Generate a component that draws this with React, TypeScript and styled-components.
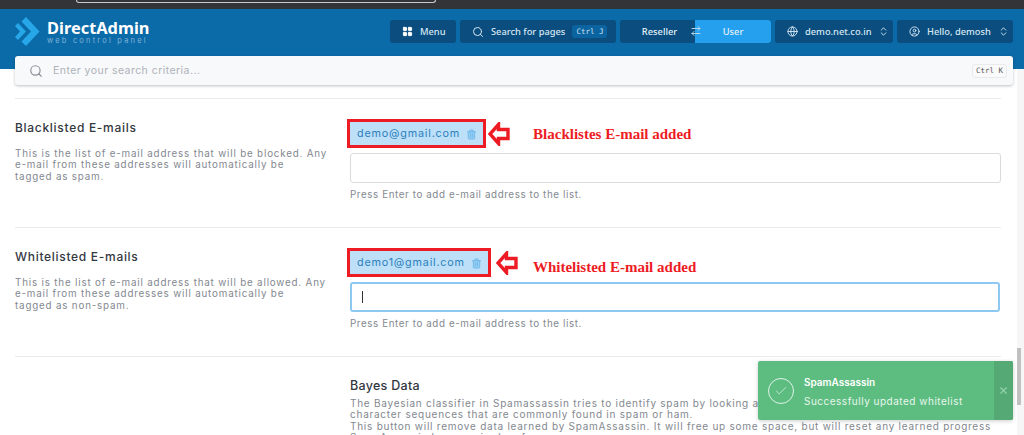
import React from "react";
import styled, { createGlobalStyle } from "styled-components";
import { LayoutGrid, Search, ArrowRightLeft, Globe, CircleUser, ChevronsUpDown, Trash2, Check, X } from "lucide-react";

const Global = createGlobalStyle`
  html, body { margin: 0; padding: 0; background: #fff; }
  body { font-family: "Inter", "Liberation Sans", sans-serif; overflow: hidden; }
`;
const Page = styled.div`position: relative; width: 1024px; height: 435px; overflow: hidden; background: #fff;`;
const BrowserStrip = styled.div`height: 9px; background: #323437; padding-left: 76px; box-sizing: border-box;`;
const UrlBar = styled.div`width: 360px; height: 3px; box-sizing: border-box; border: 1px solid #c9cacc; border-top: 0; border-radius: 0 0 4px 4px;`;
const Header = styled.header`height: 60px; box-sizing: border-box; background: #0b6aa8; display: flex; justify-content: space-between; padding: 11px 11px 0 15px;`;
const Brand = styled.div`display: flex; gap: 6px; margin-top: -3px; height: 28px; color: #fff;`;
const BrandText = styled.div`display: flex; flex-direction: column;`;
const BrandName = styled.div`font: 700 16.4px/17px "Noto Sans", sans-serif; margin-top: 2px;`;
const BrandSub = styled.div`font: 400 7.5px/9px "Inter", sans-serif; letter-spacing: 2.2px; color: #7fb4d8; white-space: nowrap;`;
const Nav = styled.nav`display: flex; gap: 4px; height: 23px; font: 500 9.3px/23px "Noto Sans", sans-serif; color: #d8e8f4;`;
const NavButton = styled.div<{ $w: number }>`width: ${p => p.$w}px; box-sizing: border-box; display: flex; align-items: center; gap: 7px; padding: 0 9px 0 12px; background: #0a4d7e; border-radius: 3px; white-space: nowrap; svg { flex: none; }`;
const NavLabel = styled.span`flex: 1;`;
const NavKey = styled.span`font: 400 7.5px/13px "DejaVu Sans Mono", monospace; background: #0b64a0; border-radius: 3px; padding: 0 4px; color: #cfe3f1; margin-right: 2px;`;
const Switcher = styled.div`width: 151px; display: flex; position: relative; background: #0a4d7e; border-radius: 3px;`;
const SwitchSide = styled.div<{ $on?: boolean }>`flex: ${p => (p.$on ? "0 0 76px" : "1")}; text-align: center; background: ${p => (p.$on ? "#25a0ee" : "transparent")}; color: #e4f1fa; border-radius: ${p => (p.$on ? "0 3px 3px 0" : "3px 0 0 3px")}; padding-left: ${p => (p.$on ? "0" : "4px")};`;
const SwitchIcon = styled.span`position: absolute; left: 70px; top: 5px; color: #b4d5ea; display: flex;`;
const SearchWrap = styled.div`position: relative; margin: -13px 11px 0 15px; height: 29px; box-sizing: border-box; background: #f8f9fb; border-radius: 3px; box-shadow: 0 1px 3px rgba(0,0,0,.25); display: flex; align-items: center; padding: 0 6px 0 14px; gap: 10px; color: #8a8f96;`;
const SearchText = styled.span`flex: 1; font-size: 10.5px; color: #aeb2b8; letter-spacing: .45px;`;
const KeyHint = styled.span`font: 400 7.5px/12px "DejaVu Sans Mono", monospace; border: 1px solid #e8eaed; border-radius: 3px; padding: 0 3px; color: #555; background: #fafafa;`;
const Content = styled.main`margin: 13px 23px 0 15px;`;
const Section = styled.section`height: 129px; box-sizing: border-box; border-top: 1px solid #e9ebee; display: grid; grid-template-columns: 335px 1fr; padding-top: 20px;`;
const Left = styled.div`padding-top: 1px;`;
const Title = styled.h3`margin: 0; font: 500 12px/15px "Inter", sans-serif; color: #33383f; letter-spacing: .7px;`;
const Desc = styled.p`margin: 13px 0 0; font: 400 9.8px/11.3px "Inter", sans-serif; color: #83888f; letter-spacing: .82px; white-space: nowrap;`;
const TagRow = styled.div`display: flex; align-items: center; height: 29px;`;
const TagFrame = styled.div`border: 3px solid #ed1c24; margin-left: -3px; background: #bde0f8; height: 29px; box-sizing: border-box; display: flex; align-items: center; gap: 6px; padding: 1px 6px 0 7px; color: #2a7fbc; font: 400 10.8px/1 "Inter", sans-serif; letter-spacing: .8px;`;
const TagBin = styled.span`color: #6db9ec; display: flex;`;
const Arrow = styled.svg<{ $gap: number }>`margin-left: ${p => p.$gap}px; flex: none;`;
const Note = styled.span<{ $gap: number; $drop: number }>`margin-left: ${p => p.$gap}px; margin-top: ${p => p.$drop}px; font: 700 15px/1 "Liberation Serif", serif; color: #ed1c24;`;
const Field = styled.div<{ $focus?: boolean }>`margin-top: 5px; height: 30px; width: ${p => (p.$focus ? "650px" : "651px")}; box-sizing: border-box; border-radius: 3px; background: #fff; display: flex; align-items: center; padding-left: 10px; border: ${p => (p.$focus ? "2px solid #8cc8f2" : "1px solid #d9dbdf")};`;
const Caret = styled.span`width: 1px; height: 12px; background: #333;`;
const Hint = styled.div`margin-top: 6px; font: 400 9.8px/12px "Inter", sans-serif; color: #83888f; letter-spacing: .6px;`;
const BayesTitle = styled(Title)`font-size: 12.5px; letter-spacing: .3px; margin-top: 1px;`;
const BayesText = styled.p`margin: 5px 0 0; font: 400 10px/11.4px "Inter", sans-serif; color: #83888f; letter-spacing: .75px; white-space: nowrap;`;
const Toast = styled.div`position: absolute; left: 758px; top: 361px; width: 255px; height: 59px; background: #5dbd80; border-radius: 2px; display: flex; color: #fff; box-shadow: 0 1px 4px rgba(0,0,0,.2);`;
const ToastIcon = styled.div`width: 45px; display: flex; align-items: center; justify-content: center; padding-right: 1px; color: #dff3e6;`;
const ToastIconRing = styled.div`width: 24px; height: 24px; border: 1px solid #dff3e6; border-radius: 50%; display: flex; align-items: center; justify-content: center;`;
const ToastBody = styled.div`flex: 1; padding-top: 14px;`;
const ToastTitle = styled.div`font: 600 10px/14px "Inter", sans-serif;`;
const ToastText = styled.div`font: 400 10px/14px "Inter", sans-serif; margin-top: 5px; color: #e8f6ed; letter-spacing: .5px;`;
const ToastClose = styled.div`width: 19px; background: #55a975; display: flex; align-items: center; justify-content: center; color: #94d2ab; border-radius: 0 2px 2px 0;`;
const Scrollbar = styled.div`position: absolute; right: 0; top: 69px; bottom: 0; width: 7px; background: #f6f6f6;`;
const Thumb = styled.div`position: absolute; left: 0; top: 279px; width: 4px; height: 57px; background: #c0c0c0;`;

const Logo = () => (
  <svg width="26" height="29" viewBox="0 0 26 29" style={{ flex: "none" }}>
    <path d="M11 0 L24.5 14.5 L11 29 L6.5 24.5 L16 14.5 L6.5 4.5Z" fill="#27a6e8" />
    <path d="M3 6 L11 14.5 L3 23 L0 20 L5 14.5 L0 9Z" fill="#27a6e8" />
  </svg>
);

const ArrowIcon = ({ gap }: { gap: number }) => (
  <Arrow $gap={gap} width="22" height="24" viewBox="0 0 22 24">
    <path d="M10.5 2.5 L2 12 L10.5 21.5 L10.5 16.5 L20 16.5 L20 7.5 L10.5 7.5Z" fill="#fff" stroke="#ed1c24" strokeWidth="3.4" />
  </Arrow>
);

type EmailProps = { title: string; lines: string[]; email: string; note: string; focus?: boolean; arrowGap: number; noteGap: number; noteDrop: number };

const EmailSection = ({ title, lines, email, note, focus, arrowGap, noteGap, noteDrop }: EmailProps) => (
  <Section>
    <Left>
      <Title>{title}</Title>
      <Desc>
        {lines.map(line => (
          <React.Fragment key={line}>{line}<br /></React.Fragment>
        ))}
      </Desc>
    </Left>
    <div>
      <TagRow>
        <TagFrame>
          {email}
          <TagBin><Trash2 size={11} strokeWidth={2} fill="currentColor" fillOpacity={0.5} /></TagBin>
        </TagFrame>
        <ArrowIcon gap={arrowGap} />
        <Note $gap={noteGap} $drop={noteDrop}>{note}</Note>
      </TagRow>
      <Field $focus={focus}>{focus && <Caret />}</Field>
      <Hint>Press Enter to add e-mail address to the list.</Hint>
    </div>
  </Section>
);

export default function App() {
  return (
    <Page>
      <Global />
      <BrowserStrip><UrlBar /></BrowserStrip>
      <Header>
        <Brand>
          <Logo />
          <BrandText>
            <BrandName>DirectAdmin</BrandName>
            <BrandSub>web control panel</BrandSub>
          </BrandText>
        </Brand>
        <Nav>
          <NavButton $w={66}><LayoutGrid size={11} fill="#fff" color="#fff" /><NavLabel>Menu</NavLabel></NavButton>
          <NavButton $w={156}><Search size={12} /><NavLabel>Search for pages</NavLabel><NavKey>Ctrl J</NavKey></NavButton>
          <Switcher>
            <SwitchSide>Reseller</SwitchSide>
            <SwitchSide $on>User</SwitchSide>
            <SwitchIcon><ArrowRightLeft size={12} /></SwitchIcon>
          </Switcher>
          <NavButton $w={118}><Globe size={11} /><NavLabel>demo.net.co.in</NavLabel><ChevronsUpDown size={11} /></NavButton>
          <NavButton $w={116}><CircleUser size={11} /><NavLabel>Hello, demosh</NavLabel><ChevronsUpDown size={11} /></NavButton>
        </Nav>
      </Header>
      <SearchWrap>
        <Search size={14} />
        <SearchText>Enter your search criteria...</SearchText>
        <KeyHint>Ctrl K</KeyHint>
      </SearchWrap>
      <Content>
        <EmailSection
          title="Blacklisted E-mails"
          lines={[
            "This is the list of e-mail address that will be blocked. Any",
            "e-mail from these addresses will automatically be",
            "tagged as spam.",
          ]}
          email="demo@gmail.com"
          note="Blacklistes E-mail added"
          arrowGap={2}
          noteGap={23}
          noteDrop={2}
        />
        <EmailSection
          title="Whitelisted E-mails"
          lines={[
            "This is the list of e-mail address that will be allowed. Any",
            "e-mail from these addresses will automatically be",
            "tagged as non-spam.",
          ]}
          email="demo1@gmail.com"
          note="Whitelisted E-mail added"
          arrowGap={5}
          noteGap={15}
          noteDrop={10}
          focus
        />
        <Section>
          <div />
          <div>
            <BayesTitle>Bayes Data</BayesTitle>
            <BayesText>
              The Bayesian classifier in Spamassassin tries to identify spam by looking at words or<br />
              character sequences that are commonly found in spam or ham.<br />
              This button will remove data learned by SpamAssassin. It will free up some space, but will reset any learned progress<br />
              SpamAssassin has acquired so far.
            </BayesText>
          </div>
        </Section>
      </Content>
      <Toast>
        <ToastIcon><ToastIconRing><Check size={14} strokeWidth={1.25} /></ToastIconRing></ToastIcon>
        <ToastBody>
          <ToastTitle>SpamAssassin</ToastTitle>
          <ToastText>Successfully updated whitelist</ToastText>
        </ToastBody>
        <ToastClose><X size={11} strokeWidth={2.5} /></ToastClose>
      </Toast>
      <Scrollbar><Thumb /></Scrollbar>
    </Page>
  );
}
